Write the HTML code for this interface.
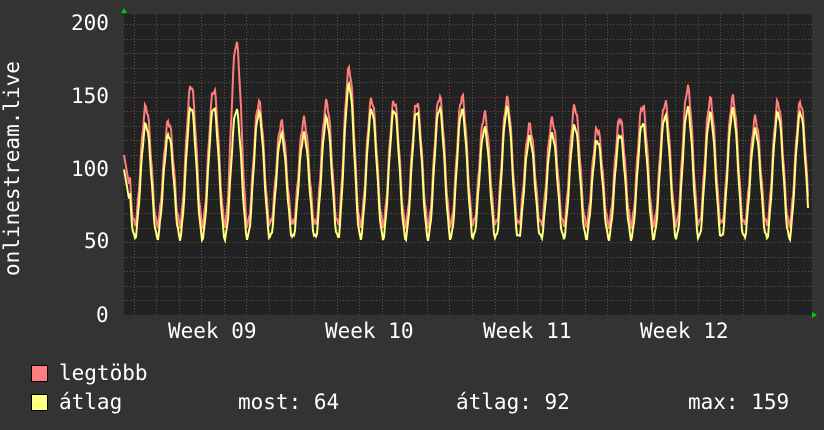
<!DOCTYPE html>
<html><head><meta charset="utf-8"><style>
html,body{margin:0;padding:0;background:#333;}
body{width:824px;height:430px;position:relative;overflow:hidden;font-family:"DejaVu Sans Mono","Liberation Mono",monospace;color:#fff;}
.t{position:absolute;font-size:21px;white-space:pre;line-height:1;}
.box{position:absolute;width:15px;height:15px;border:1px solid #000;}
</style></head><body>
<svg id="g" width="824" height="430" style="position:absolute;left:0;top:0">
<rect x="124" y="14" width="688" height="301" fill="#222"/>
<g id="grid"></g>
<polyline id="red" fill="none" stroke="#ff7d7d" stroke-width="2"/>
<polyline id="yel" fill="none" stroke="#ffff80" stroke-width="2"/>
<polygon points="121,13 127,13 124,8" fill="#0c0"/>
<polygon points="812,312 812,318 817,315" fill="#0c0"/>
</svg>
<div class="t" style="left:71px;top:13px">200</div>
<div class="t" style="left:71px;top:86px">150</div>
<div class="t" style="left:71px;top:159px">100</div>
<div class="t" style="left:84px;top:231px">50</div>
<div class="t" style="left:96px;top:305px">0</div>
<div class="t" style="left:2px;top:276px;transform:rotate(-90deg);transform-origin:0 0;width:230px">onlinestream.live</div>
<div class="t" style="left:168px;top:321px">Week 09</div>
<div class="t" style="left:325px;top:321px">Week 10</div>
<div class="t" style="left:483px;top:321px">Week 11</div>
<div class="t" style="left:640px;top:321px">Week 12</div>
<div class="box" style="left:31px;top:365px;background:#ff7d7d"></div>
<div class="box" style="left:31px;top:394px;background:#ffff80"></div>
<div class="t" style="left:59px;top:363px">legtöbb</div>
<div class="t" style="left:59px;top:392px">átlag</div>
<div class="t" style="left:238px;top:392px">most: 64</div>
<div class="t" style="left:456px;top:392px">átlag: 92</div>
<div class="t" style="left:688px;top:392px">max: 159</div>
<script>
var ns="http://www.w3.org/2000/svg",g=document.getElementById("grid");
function ln(x1,y1,x2,y2,c){var l=document.createElementNS(ns,"line");l.setAttribute("x1",x1);l.setAttribute("y1",y1);l.setAttribute("x2",x2);l.setAttribute("y2",y2);l.setAttribute("stroke",c);l.setAttribute("stroke-width",1);l.setAttribute("stroke-dasharray","1,2");g.appendChild(l);}
function Y(v){return 315-v*1.455;}
for(var v=10;v<=200;v+=10){var y=Math.round(Y(v))+0.5;ln(124,y,812,y,v%50==0?"#7a4040":"#555");}
for(var i=-1;i<31;i++){var x=Math.round(133.5+i*22.57)+0.5;if(x<125||x>811)continue;var maj=(i%7==0);ln(x,14,x,315,maj?"#7a4040":"#555");}
var pk=[143,133,158,155,187,146,132,134,146,169,148,147,146,150,150,138,148,130,134,143,128,135,144,146,156,148,149,135,146,146];
var yk=[131,124,143,143,141,139,124,124,135,158,141,141,140,142,141,128,142,122,124,130,120,124,132,137,142,138,141,127,139,139];
var rp=[],yp=[];
for(var x=124;x<=808;x++){
 var t=(x-146+22.6*0.5)/22.57; var d=Math.floor(t); var ph=t-d;
 var idx=Math.max(0,Math.min(29,d));
 var f=Math.pow(Math.sin(Math.PI*ph),2);
 var n=Math.sin(x*1.7)*3;
 var r=62+(pk[idx]-62)*f+n, a=53+(yk[idx]-53)*f+n*0.7;
 if(x<130){r=110-(x-124)*4;a=100-(x-124)*4;}
 rp.push(x+","+Y(r).toFixed(1));yp.push(x+","+Y(a).toFixed(1));
}
document.getElementById("red").setAttribute("points",rp.join(" "));
document.getElementById("yel").setAttribute("points",yp.join(" "));
</script>
</body></html>
